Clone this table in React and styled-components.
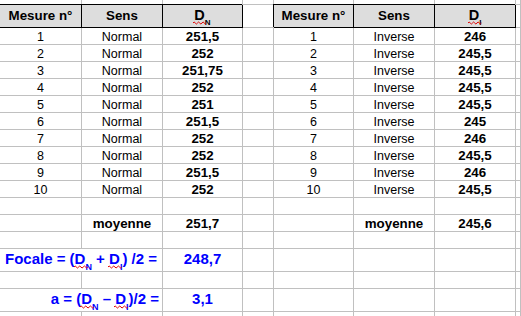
import React from 'react';
import styled, { createGlobalStyle } from 'styled-components';

const Global = createGlobalStyle`
  html, body { margin: 0; padding: 0; background: #ffffff; }
  body { font-family: "Liberation Sans", Arial, sans-serif; }
`;

const GRID = '#c0c0c0';

const Sheet = styled.div`
  display: grid;
  grid-template-columns: 82px 81px 80px 31px 80px 81px 81px 1fr;
  grid-template-rows: 5px 23px repeat(10, 17px) 17px 17px 17px 23px 17px 23px 17px;
  width: 521px;
  height: 316px;
  overflow: hidden;
  font-family: "Liberation Sans", Arial, sans-serif;
  color: #000;
`;

const Cell = styled.div`
  box-sizing: border-box;
  border-right: 1px solid ${GRID};
  border-bottom: 1px solid ${GRID};
  grid-column: ${(p) => (p.$span ? `span ${p.$span}` : 'auto')};
  white-space: nowrap;
  font-size: ${(p) => (p.$bold ? '13.33px' : '12.5px')};
  font-weight: ${(p) => (p.$bold ? 700 : 400)};
  line-height: 16px;
  padding-top: 1px;
  text-align: center;
`;

const HeadCell = styled.div`
  box-sizing: border-box;
  background: #dddddd;
  border-right: 1px solid #000;
  border-bottom: 1px solid #000;
  box-shadow: -1px -1px 0 #000;
  font-size: 13.33px;
  font-weight: 700;
  line-height: 22px;
  text-align: center;
  white-space: nowrap;
`;

const BlueCell = styled.div`
  box-sizing: border-box;
  border-right: 1px solid ${GRID};
  border-bottom: 1px solid ${GRID};
  grid-column: ${(p) => (p.$span ? `span ${p.$span}` : 'auto')};
  color: #0000ff;
  font-size: 15px;
  font-weight: 700;
  line-height: 17px;
  padding-top: 1px;
  padding-right: ${(p) => (p.$align === 'right' ? '3px' : '0')};
  text-align: ${(p) => p.$align || 'center'};
  white-space: nowrap;
`;

const Letter = styled.span`
  position: relative;
  display: inline-block;
  line-height: normal;
  font-size: ${(p) => p.$size || 'inherit'};
`;

const Squiggle = styled.svg`
  position: absolute;
  left: -1px;
  top: calc(0.905em + 1px);
  width: calc(100% + 3px);
  height: 3px;
  overflow: visible;
`;

const Sub = styled.span`
  font-size: ${(p) => p.$size};
  vertical-align: ${(p) => p.$drop};
  line-height: 0;
`;

const Wavy = () => (
  <Squiggle viewBox="0 0 12 3" preserveAspectRatio="none">
    <path
      d="M0 2 Q1 0 2 2 T4 2 T6 2 T8 2 T10 2 T12 2"
      fill="none"
      stroke="#e00000"
      strokeWidth="1"
      vectorEffect="non-scaling-stroke"
    />
  </Squiggle>
);

const DSub = ({ sub, size, subSize, drop }) => (
  <>
    <Letter $size={size}>
      D
      <Wavy />
    </Letter>
    <Sub $size={subSize} $drop={drop}>
      {sub}
    </Sub>
  </>
);

const left = ['251,5', '252', '251,75', '252', '251', '251,5', '252', '252', '251,5', '252'];
const right = ['246', '245,5', '245,5', '245,5', '245,5', '245', '246', '245,5', '246', '245,5'];

const EmptyRow = ({ k }) => (
  <>
    {Array.from({ length: 8 }).map((_, i) => (
      <Cell key={`${k}-${i}`} />
    ))}
  </>
);

export default function App() {
  return (
    <>
      <Global />
      <Sheet>
        <EmptyRow k="top" />

        <HeadCell>Mesure n°</HeadCell>
        <HeadCell>Sens</HeadCell>
        <HeadCell>
          <DSub sub="N" size="14.5px" subSize="8px" drop="-5px" />
        </HeadCell>
        <Cell />
        <HeadCell>Mesure n°</HeadCell>
        <HeadCell>Sens</HeadCell>
        <HeadCell>
          <DSub sub="I" size="14.5px" subSize="8px" drop="-5px" />
        </HeadCell>
        <Cell />

        {left.map((v, i) => (
          <React.Fragment key={i}>
            <Cell>{i + 1}</Cell>
            <Cell>Normal</Cell>
            <Cell $bold>{v}</Cell>
            <Cell />
            <Cell>{i + 1}</Cell>
            <Cell>Inverse</Cell>
            <Cell $bold>{right[i]}</Cell>
            <Cell />
          </React.Fragment>
        ))}

        <EmptyRow k="e1" />

        <Cell />
        <Cell $bold>moyenne</Cell>
        <Cell $bold>251,7</Cell>
        <Cell />
        <Cell />
        <Cell $bold>moyenne</Cell>
        <Cell $bold>245,6</Cell>
        <Cell />

        <EmptyRow k="e2" />

        <BlueCell $span={2}>
          Focale = (<DSub sub="N" subSize="9px" drop="-6px" /> + <DSub sub="I" subSize="9px" drop="-6px" />) /2 =
        </BlueCell>
        <BlueCell>248,7</BlueCell>
        <Cell />
        <Cell />
        <Cell />
        <Cell />
        <Cell />

        <EmptyRow k="e3" />

        <BlueCell $span={2} $align="right">
          a = (<DSub sub="N" subSize="9px" drop="-6px" /> – <DSub sub="I" subSize="9px" drop="-6px" />)/2 =
        </BlueCell>
        <BlueCell>3,1</BlueCell>
        <Cell />
        <Cell />
        <Cell />
        <Cell />
        <Cell />

        <EmptyRow k="e4" />
      </Sheet>
    </>
  );
}
